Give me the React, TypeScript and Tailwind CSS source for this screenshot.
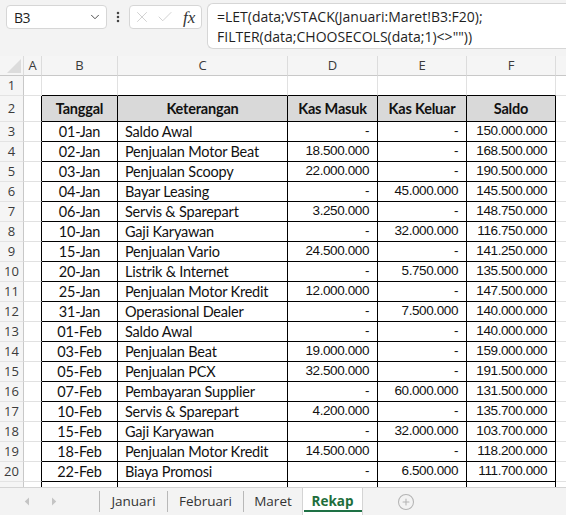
import React from "react";
import { ChevronDown, EllipsisVertical, X, Check, CirclePlus } from "lucide-react";

type Row = [string, string, string, string, string];

const rows: Row[] = [
  ["01-Jan", "Saldo Awal", "-", "-", "150.000.000"],
  ["02-Jan", "Penjualan Motor Beat", "18.500.000", "-", "168.500.000"],
  ["03-Jan", "Penjualan Scoopy", "22.000.000", "-", "190.500.000"],
  ["04-Jan", "Bayar Leasing", "-", "45.000.000", "145.500.000"],
  ["06-Jan", "Servis & Sparepart", "3.250.000", "-", "148.750.000"],
  ["10-Jan", "Gaji Karyawan", "-", "32.000.000", "116.750.000"],
  ["15-Jan", "Penjualan Vario", "24.500.000", "-", "141.250.000"],
  ["20-Jan", "Listrik & Internet", "-", "5.750.000", "135.500.000"],
  ["25-Jan", "Penjualan Motor Kredit", "12.000.000", "-", "147.500.000"],
  ["31-Jan", "Operasional Dealer", "-", "7.500.000", "140.000.000"],
  ["01-Feb", "Saldo Awal", "-", "-", "140.000.000"],
  ["03-Feb", "Penjualan Beat", "19.000.000", "-", "159.000.000"],
  ["05-Feb", "Penjualan PCX", "32.500.000", "-", "191.500.000"],
  ["07-Feb", "Pembayaran Supplier", "-", "60.000.000", "131.500.000"],
  ["10-Feb", "Servis & Sparepart", "4.200.000", "-", "135.700.000"],
  ["15-Feb", "Gaji Karyawan", "-", "32.000.000", "103.700.000"],
  ["18-Feb", "Penjualan Motor Kredit", "14.500.000", "-", "118.200.000"],
  ["22-Feb", "Biaya Promosi", "-", "6.500.000", "111.700.000"],
  ["", "", "", "", ""],
];

const uiFont = "font-['Open_Sans','Noto_Sans',sans-serif]";
const cellFont = "font-['Lato','Noto_Sans',sans-serif]";
const numFont = "font-['Liberation_Sans','Arial',sans-serif]";

function RowNum({ n, h }: { n: string; h: string }) {
  return (
    <div
      className={`${h} flex items-center justify-center bg-[#f5f5f5] border-r border-b border-r-[#c8c8c8] border-b-[#e3e3e3] text-[13px] text-[#3b3b3b] ${uiFont}`}
    >
      {n}
    </div>
  );
}

export default function App() {
  return (
    <div className="w-[566px] h-[516px] overflow-hidden bg-white flex flex-col select-none">
      {/* Toolbar */}
      <div className="h-[56px] shrink-0 bg-[#f3f3f3] flex items-start pt-[4px] pl-[6px]">
        <div className="mt-[1px] w-[101px] h-[24px] bg-white border border-[#d6d6d6] rounded-[4px] flex items-center justify-between pl-[7px] pr-[4px]">
          <span className={`text-[14px] text-[#1f1f1f] ${uiFont} tracking-[-0.5px]`}>B3</span>
          <ChevronDown size={14} strokeWidth={1.6} className="text-[#444]" />
        </div>
        <div className="w-[22px] h-[26px] flex items-center justify-center">
          <EllipsisVertical size={14} strokeWidth={2.4} className="text-[#444]" />
        </div>
        <div className="mt-[1px] w-[73px] h-[24px] bg-white border border-[#d6d6d6] rounded-[4px] flex items-center pl-[3px] gap-[5px]">
          <X size={18} strokeWidth={0.9} className="text-[#bcbcbc]" />
          <Check size={18} strokeWidth={0.9} className="text-[#bcbcbc]" />
          <span className="ml-[4px] italic text-[17px] leading-none text-[#333] font-['Liberation_Serif','DejaVu_Serif',serif]">
            fx
          </span>
        </div>
        <div className="ml-[5px] -mt-[1px] flex-1 h-[46px] bg-white border border-r-0 border-[#d6d6d6] rounded-l-[6px] pl-[9px] pt-[3px]">
          <div className={`text-[14px] leading-[20px] text-[#1f1f1f] ${uiFont}`}>
            =LET(data;VSTACK(Januari:Maret!B3:F20);
          </div>
          <div className={`text-[14px] leading-[20px] text-[#1f1f1f] ${uiFont}`}>
            FILTER(data;CHOOSECOLS(data;1)&lt;&gt;""))
          </div>
        </div>
      </div>

      {/* Sheet grid */}
      <div className="h-[432px] shrink-0 overflow-hidden">
        <div className="grid grid-cols-[24px_18px_76px_170px_90px_89px_89px_1fr]">
          {/* column header row */}
          <div className="h-[20px] bg-[#f5f5f5] border-r border-b border-r-[#dcdcdc] border-b-[#c8c8c8] relative">
            <div className="absolute right-[2px] bottom-[2px] w-0 h-0 border-l-[14px] border-l-transparent border-b-[14px] border-b-[#dcdcdc]" />
          </div>
          {["A", "B", "C", "D", "E", "F", ""].map((c, i) => (
            <div
              key={i}
              className={`h-[20px] bg-[#f5f5f5] border-b border-b-[#c8c8c8] ${i < 6 ? "border-r border-r-[#dcdcdc]" : ""} flex items-center justify-center text-[13px] text-[#3b3b3b] ${uiFont}`}
            >
              {c}
            </div>
          ))}

          {/* row 1 */}
          <RowNum n="1" h="h-[20px]" />
          <div className="h-[20px] border-r border-b border-[#e1e1e1]" />
          {[0, 1, 2, 3, 4].map((i) => (
            <div key={i} className="h-[20px] border-b border-b-black border-r border-r-[#e1e1e1]" />
          ))}
          <div className="h-[20px] border-b border-[#e1e1e1]" />

          {/* row 2 header */}
          <RowNum n="2" h="h-[26px]" />
          <div className="h-[26px] border-r border-b border-r-black border-b-[#e1e1e1]" />
          {["Tanggal", "Keterangan", "Kas Masuk", "Kas Keluar", "Saldo"].map((t) => (
            <div
              key={t}
              className={`h-[26px] bg-[#d9d9d9] border-r border-b border-black flex items-center justify-center text-[14.5px] tracking-[-0.2px] font-bold text-[#111] ${cellFont}`}
            >
              {t}
            </div>
          ))}
          <div className="h-[26px] border-b border-[#e1e1e1]" />

          {/* data rows */}
          {rows.map((r, idx) => (
            <React.Fragment key={idx}>
              <RowNum n={idx < 18 ? String(idx + 3) : ""} h="h-[20px]" />
              <div className="h-[20px] border-r border-b border-r-black border-b-[#e1e1e1]" />
              <div
                className={`h-[20px] border-r border-b border-black flex items-center justify-center text-[14.5px] tracking-[-0.2px] text-[#111] ${cellFont}`}
              >
                {r[0]}
              </div>
              <div
                className={`h-[20px] border-r border-b border-black flex items-center pl-[7px] text-[14.5px] tracking-[-0.2px] text-[#111] whitespace-nowrap ${cellFont}`}
              >
                {r[1]}
              </div>
              {[r[2], r[3], r[4]].map((v, j) => (
                <div
                  key={j}
                  className={`h-[20px] border-r border-b border-black flex items-center justify-end pr-[8px] text-[13.5px] tracking-[-0.4px] text-[#111] ${numFont}`}
                >
                  {v}
                </div>
              ))}
              <div className="h-[20px] border-b border-[#e1e1e1]" />
            </React.Fragment>
          ))}
        </div>
      </div>

      {/* Tab bar */}
      <div className={`h-[28px] shrink-0 bg-[#f3f3f3] border-t border-[#d4d4d4] -mt-[1px] flex items-stretch text-[13.5px] text-[#333] ${uiFont}`}>
        <div className="w-[99px] flex items-center pl-[24px] gap-[21px]">
          <svg width="6" height="9" viewBox="0 0 6 9">
            <path d="M5 0.5 L0.8 4.5 L5 8.5 Z" fill="#c4c4c4" />
          </svg>
          <svg width="6" height="9" viewBox="0 0 6 9">
            <path d="M1 0.5 L5.2 4.5 L1 8.5 Z" fill="#c4c4c4" />
          </svg>
        </div>
        <div className="w-px my-[3px] bg-[#b8b8b8]" />
        <div className="w-[67px] flex items-center justify-center">Januari</div>
        <div className="w-px my-[3px] bg-[#b8b8b8]" />
        <div className="w-[75px] flex items-center justify-center">Februari</div>
        <div className="w-px my-[3px] bg-[#b8b8b8]" />
        <div className="w-[58px] flex items-center justify-center">Maret</div>
        <div className="w-[61px] bg-white border-l border-r border-[#d4d4d4] relative flex items-center justify-center font-bold text-[#1e6e3c]">
          Rekap
          <div className="absolute left-[1px] right-0 bottom-[3px] h-[2px] bg-[#1e7145]" />
        </div>
        <div className="flex-1 flex items-center pl-[34px]">
          <CirclePlus size={18} strokeWidth={1.4} className="text-[#b4b4b4]" />
        </div>
      </div>
    </div>
  );
}
